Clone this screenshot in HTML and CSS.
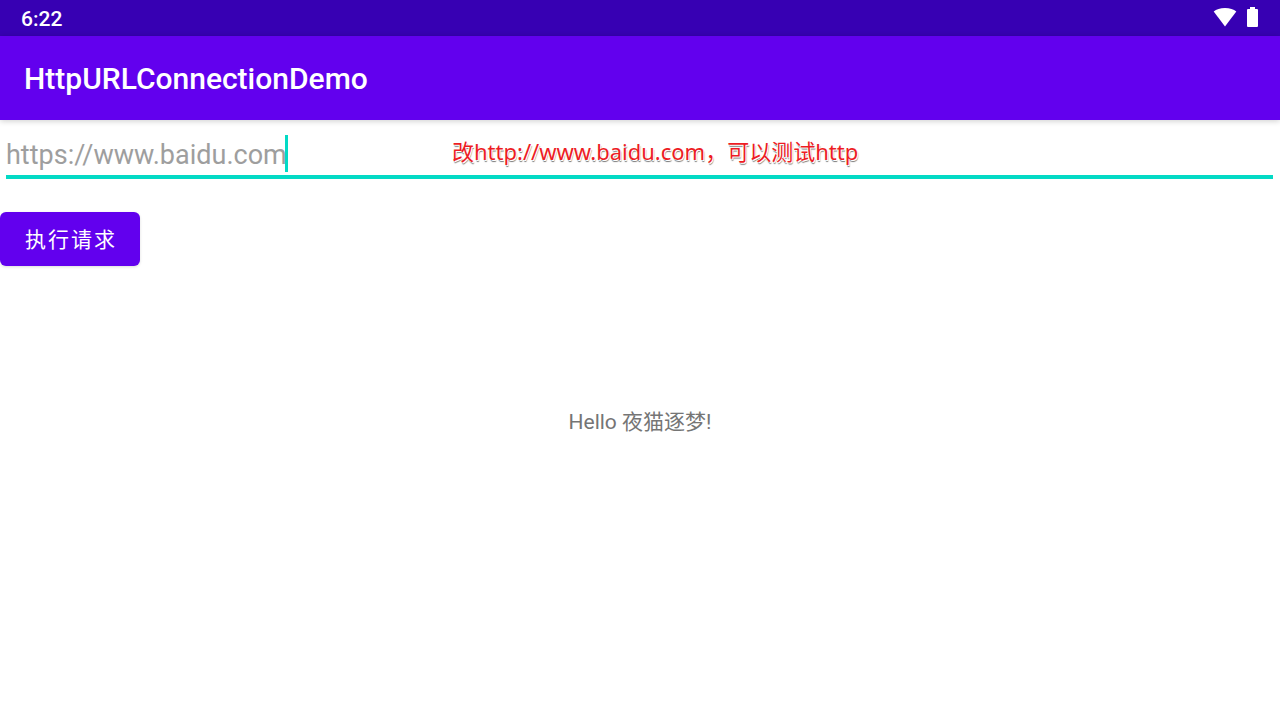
FILE: index.html
```html
<!DOCTYPE html>
<html lang="zh-CN">
<head>
    <meta charset="UTF-8">
    <meta name="viewport" content="width=device-width, initial-scale=1.0">
    <title>HttpURLConnectionDemo</title>
    <link rel="stylesheet" href="styles.css">
</head>
<body>
    <!-- 状态栏 -->
    <div class="status-bar">
        <span class="clock">6:22</span>
        <div class="status-icons">
            <svg width="24" height="20" viewBox="0 0 24 20" fill="#fff" aria-hidden="true">
                <path d="M12 19.5 0.7 4.6C3.2 2.2 7.2 1 12 1s8.800 1.200 11.300 3.600z"/>
            </svg>
            <svg width="12" height="20" viewBox="0 0 12 20" fill="#fff" aria-hidden="true">
                <path d="M3 0h5v2H10q1 0 1 1v16q0 1-1 1H1q-1 0-1-1V3q0-1 1-1h2z"/>
            </svg>
        </div>
    </div>

    <header class="app-bar">
        <h1>HttpURLConnectionDemo</h1>
    </header>

    <main class="content">
        <form class="request-form">
            <div class="url-field">
                <input type="text" class="url-input" placeholder="https://www.baidu.com" aria-label="https://www.baidu.com">
                <span class="cursor"></span>
                <span class="note">改http://www.baidu.com，可以测试http</span>
            </div>
            <button type="button" class="btn">执行请求</button>
        </form>
        <p class="result">Hello 夜猫逐梦!</p>
    </main>
</body>
</html>
```

FILE: styles.css
```css
* {
    margin: 0;
    padding: 0;
    box-sizing: border-box;
}

body {
    display: flex;
    flex-direction: column;
    min-height: 100vh;
    font-family: Roboto, "Noto Sans CJK SC", sans-serif;
    background-color: #fff;
}

/* 状态栏 */
.status-bar {
    display: flex;
    align-items: center;
    justify-content: space-between;
    height: 36px;
    padding: 0 21px;
    background-color: #3700b3;
    color: #fff;
}

.clock {
    padding-top: 2px;
    font-size: 21px;
    font-weight: 500;
}

.status-icons {
    display: flex;
    gap: 10px;
    padding-bottom: 2px;
}

/* 标题栏 */
.app-bar {
    display: flex;
    align-items: center;
    height: 84px;
    padding: 0 24px;
    background-color: #6200ee;
    color: #fff;
    box-shadow: 0 1px 6px rgba(0, 0, 0, 0.2);
}

.app-bar h1 {
    font-size: 30px;
    font-weight: 500;
}

/* 内容区，结果文字在整个区域居中 */
.content {
    display: grid;
    flex: 1;
}

.request-form,
.result {
    grid-area: 1 / 1;
}

.request-form {
    align-self: start;
}

.url-field {
    position: relative;
    display: flex;
    margin: 15px 7px 33px 6px;
    padding-bottom: 3px;
    border-bottom: 4px solid #03dac5;
}

.url-input {
    field-sizing: content;
    height: 37px;
    padding-top: 2px;
    border: none;
    outline: none;
    background: none;
    font-family: inherit;
    font-size: 27px;
}

.url-input::placeholder {
    color: #9e9e9e;
}

.cursor {
    width: 3px;
    margin-left: -2px;
    background-color: #03dac5;
}

/* 红色标注 */
.note {
    position: absolute;
    top: 0;
    left: 446px;
    font-family: "Noto Sans", "Noto Sans CJK SC", sans-serif;
    font-size: 22px;
    line-height: 33px;
    white-space: nowrap;
    color: #ed1c24;
    text-shadow: 1px 1px 0 #fff, -1px 0 0 #fff, 1px 2px 1px #777;
}

.btn {
    display: block;
    height: 54px;
    padding: 0 23px 2px 25px;
    border: none;
    border-radius: 6px;
    background-color: #6200ee;
    color: #fff;
    font-family: inherit;
    font-size: 21px;
    letter-spacing: 2px;
    box-shadow: 0 1px 3px rgba(0, 0, 0, 0.14);
    cursor: pointer;
}

.result {
    place-self: center;
    font-size: 21px;
    color: #757575;
    pointer-events: none;
}
```
